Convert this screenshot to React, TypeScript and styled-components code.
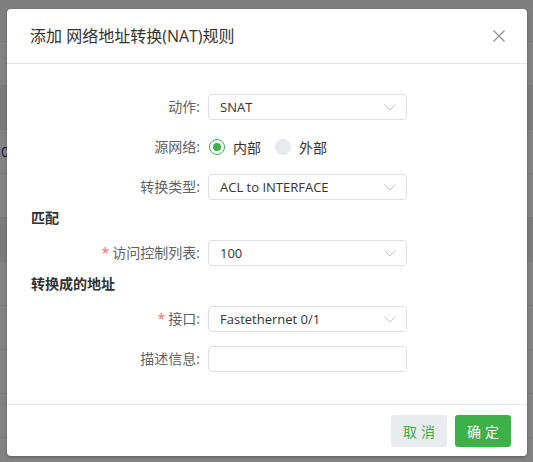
import React from "react";
import styled, { createGlobalStyle } from "styled-components";

const Global = createGlobalStyle`
  html, body { margin: 0; padding: 0; }
  body {
    width: 533px;
    height: 462px;
    overflow: hidden;
    font-family: "Open Sans", "Noto Sans CJK SC", sans-serif;
    background: #ffffff;
  }
`;

const Page = styled.div`
  position: relative;
  width: 533px;
  height: 462px;
  overflow: hidden;
  background: #ffffff;
`;

const BgTable = styled.div`
  display: flex;
  flex-direction: column;
`;

const BgHead = styled.div`
  height: 42px;
  background: #fafafa;
  border-bottom: 1px solid #ebeef5;
  box-sizing: border-box;
`;

const BgRow = styled.div<{ $shade?: boolean }>`
  height: 44px;
  box-sizing: border-box;
  border-bottom: 1px solid #ebeef5;
  background: ${(p) => (p.$shade ? "#f2f2f2" : "#ffffff")};
  display: flex;
  align-items: center;
  font-size: 14px;
  color: #1d3d8a;
  padding-left: 1px;
`;

const Mask = styled.div`
  position: absolute;
  inset: 0;
  background: rgba(0, 0, 0, 0.49);
`;

const Dialog = styled.div`
  position: absolute;
  left: 7px;
  top: 9px;
  width: 520px;
  background: #ffffff;
  border-radius: 4px;
  box-shadow: 0 1px 3px rgba(0, 0, 0, 0.3);
  display: flex;
  flex-direction: column;
`;

const Header = styled.div`
  height: 55px;
  box-sizing: border-box;
  border-bottom: 1px solid #e6e6e6;
  display: flex;
  align-items: center;
  justify-content: space-between;
  padding: 0 22px 0 23px;
`;

const Title = styled.div`
  font-size: 16px;
  color: #303133;
  line-height: 24px;
`;

const Close = styled.button`
  border: none;
  background: none;
  padding: 0;
  width: 12px;
  height: 12px;
  display: flex;
  cursor: pointer;
`;

const Body = styled.div`
  padding: 30px 24px 32px 24px;
  display: flex;
  flex-direction: column;
`;

const Row = styled.div<{ $last?: boolean }>`
  display: grid;
  grid-template-columns: 177px 199px;
  align-items: center;
  height: 26px;
  margin-bottom: ${(p) => (p.$last ? "0" : "14px")};
`;

const Label = styled.label`
  text-align: right;
  padding-right: 8px;
  font-size: 14px;
  color: #606266;
  line-height: 26px;
  white-space: nowrap;
`;

const Star = styled.span`
  color: #f56c6c;
  margin-right: 3px;
`;

const SectionTitle = styled.div`
  height: 40px;
  margin-top: -14px;
  box-sizing: border-box;
  padding-top: 8px;
  font-size: 14px;
  font-weight: bold;
  color: #303133;
  line-height: 20px;
`;

const Select = styled.div`
  height: 26px;
  box-sizing: border-box;
  border: 1px solid #dcdfe6;
  border-radius: 4px;
  display: flex;
  align-items: center;
  justify-content: space-between;
  padding: 0 10px 0 11px;
  font-size: 13px;
  color: #333333;
`;

const Input = styled.div`
  height: 26px;
  box-sizing: border-box;
  border: 1px solid #dcdfe6;
  border-radius: 4px;
`;

const Radios = styled.div`
  display: flex;
  align-items: center;
  gap: 14px;
  padding-left: 1px;
`;

const RadioItem = styled.div`
  display: flex;
  align-items: center;
  gap: 8px;
  font-size: 14px;
  color: #333333;
`;

const Dot = styled.span<{ $on?: boolean }>`
  width: 16px;
  height: 16px;
  box-sizing: border-box;
  border-radius: 50%;
  border: 1px solid ${(p) => (p.$on ? "#3db04a" : "#e4e6ea")};
  background: ${(p) => (p.$on ? "#ffffff" : "#e9eaee")};
  display: flex;
  align-items: center;
  justify-content: center;
  &::after {
    content: "";
    width: 8px;
    height: 8px;
    border-radius: 50%;
    background: ${(p) => (p.$on ? "#3db04a" : "transparent")};
  }
`;

const Footer = styled.div`
  border-top: 1px solid #e6e6e6;
  padding: 10px 16px 9px;
  display: flex;
  justify-content: flex-end;
  gap: 8px;
`;

const Btn = styled.button<{ $primary?: boolean }>`
  width: 56px;
  height: 32px;
  border: none;
  border-radius: 3px;
  font-family: inherit;
  font-size: 14px;
  letter-spacing: 4px;
  text-indent: 4px;
  padding: 0;
  cursor: pointer;
  background: ${(p) => (p.$primary ? "#3db04a" : "#e9ebef")};
  color: ${(p) => (p.$primary ? "#ffffff" : "#3db04a")};
`;

const Chevron = () => (
  <svg width="12" height="7" viewBox="0 0 12 7" fill="none">
    <path d="M0.5 0.5 L6 6 L11.5 0.5" stroke="#c0c4cc" strokeWidth="1" />
  </svg>
);

const XIcon = () => (
  <svg width="12" height="12" viewBox="0 0 12 12" fill="none">
    <path d="M0.5 0.5 L11.5 11.5 M11.5 0.5 L0.5 11.5" stroke="#909399" strokeWidth="1.3" />
  </svg>
);

export default function App() {
  const rows = [false, true, false, false, true, false, false, false, false];
  return (
    <Page>
      <Global />
      <BgTable>
        <BgHead />
        {rows.map((s, i) => (
          <BgRow key={i} $shade={s}>
            {i === 2 ? "0" : ""}
          </BgRow>
        ))}
      </BgTable>
      <Mask />
      <Dialog>
        <Header>
          <Title>添加 网络地址转换(NAT)规则</Title>
          <Close aria-label="关闭">
            <XIcon />
          </Close>
        </Header>
        <Body>
          <Row>
            <Label>动作:</Label>
            <Select>
              <span>SNAT</span>
              <Chevron />
            </Select>
          </Row>
          <Row>
            <Label>源网络:</Label>
            <Radios>
              <RadioItem>
                <Dot $on />
                内部
              </RadioItem>
              <RadioItem>
                <Dot />
                外部
              </RadioItem>
            </Radios>
          </Row>
          <Row>
            <Label>转换类型:</Label>
            <Select>
              <span>ACL to INTERFACE</span>
              <Chevron />
            </Select>
          </Row>
          <SectionTitle>匹配</SectionTitle>
          <Row>
            <Label>
              <Star>*</Star>访问控制列表:
            </Label>
            <Select>
              <span>100</span>
              <Chevron />
            </Select>
          </Row>
          <SectionTitle>转换成的地址</SectionTitle>
          <Row>
            <Label>
              <Star>*</Star>接口:
            </Label>
            <Select>
              <span>Fastethernet 0/1</span>
              <Chevron />
            </Select>
          </Row>
          <Row $last>
            <Label>描述信息:</Label>
            <Input />
          </Row>
        </Body>
        <Footer>
          <Btn>取消</Btn>
          <Btn $primary>确定</Btn>
        </Footer>
      </Dialog>
    </Page>
  );
}
